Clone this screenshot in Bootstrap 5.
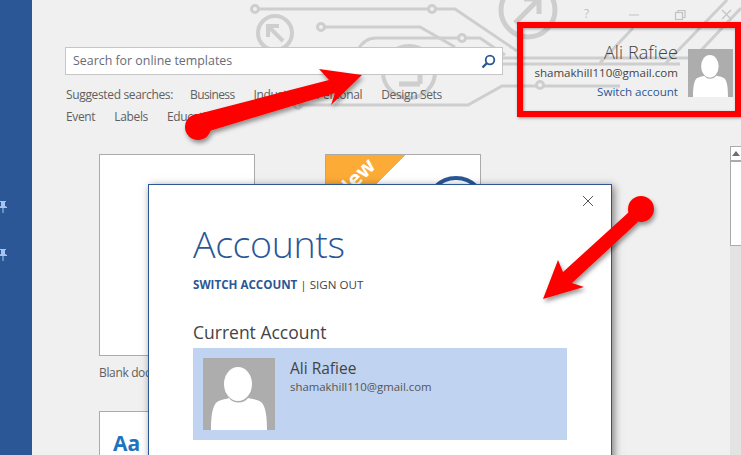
<!DOCTYPE html>
<html lang="en">
<head>
<meta charset="utf-8">
<title>Accounts</title>
<link rel="stylesheet" href="https://cdn.jsdelivr.net/npm/bootstrap@5.3.0/dist/css/bootstrap.min.css">
<style>
html,body{margin:0;width:741px;height:455px;overflow:hidden;background:#f0f0f0;font-family:"Open Sans","Noto Sans",sans-serif;color:#5f5f5f}
.shell{height:455px;position:relative;overflow:hidden}
.side{width:32px;background:#2b5797;padding-top:201px;gap:36px}
.pin{width:8px;height:12px;display:block}
.main-area{position:relative;min-width:0}
.circuit{position:absolute;left:-32px;top:0;width:741px;height:130px}
.head-row{position:relative;height:146px}
.search-col{margin-left:33px;padding-top:47px;width:438px}
.search-box{height:28px;background:#fff;border:1px solid #c6c6c6;padding:0 6px 0 7px;font-size:12.4px;color:#6a6a78}
.sugg{font-size:12px;letter-spacing:-.35px;gap:19px;line-height:22px;color:#5f5f5f;padding-left:1px}
.sugg-1{margin-top:9px}
.sugg-lead{margin-right:-2px}
.sugg-tight{letter-spacing:-.6px}
.acct{width:209px;margin-left:auto;padding-top:41px;padding-right:8px;gap:10px}
.acct-name{font-size:18px;line-height:23px;font-weight:300;color:#444;letter-spacing:.1px}
.acct-mail{font-size:11.55px;line-height:18px;color:#444}
.acct-link{font-size:11.6px;line-height:18px;color:#2b5797;margin-top:1px}
.ava-sm{width:45px;height:48px;margin-top:8px;display:block}
.gal{padding-left:67px;padding-top:8px;gap:70px}
.tile{width:156px;height:202px;background:#fff;border:1px solid #ababab;position:relative;overflow:hidden}
.tile-b{height:80px;margin-top:30px;padding:18px 13px}
.cap{font-size:12px;letter-spacing:-.35px;line-height:16px;margin-top:9px}
.aa{font-size:21px;font-weight:700;color:#1e73be;line-height:26px}
.ribbon{position:absolute;left:0;top:0;width:80px;height:80px;background:linear-gradient(135deg,#fbab36 50%,transparent 50%)}
.ribbon-t{position:absolute;left:5px;top:8px;color:#fff;font-weight:700;font-size:21px;transform:rotate(-45deg)}
.ring{position:absolute;left:99px;top:21px;width:62px;height:62px;border:4px solid #2b5797;border-radius:50%}
.scroll-wrap{position:absolute;right:0;top:146px;width:11px;height:309px;background:#e3e3e3}
.scroll-btn{height:100px;background:#fff;border:1px solid #ababab;border-right:0}
.scroll-up{height:15px;border-bottom:2px solid #ababab;padding-top:4px}
.tri{width:0;height:0;border-left:4px solid transparent;border-right:4px solid transparent;border-bottom:5px solid #6e6e6e;margin-left:1px}
.dlg{position:absolute;left:148px;top:184px;width:464px;height:290px;background:#fff;border:1px solid #2b5797;box-shadow:2px 2px 8px rgba(0,0,0,.5);padding:34px 44px 0 44px}
.dlg-x{position:absolute;right:17px;top:10px;width:12px;height:12px;display:block}
.dlg-title{font-size:37.6px;line-height:50px;font-weight:300;color:#2b5797;margin:0;letter-spacing:-.4px}
.dlg-links{font-size:11.6px;line-height:16px;margin-top:8px;color:#444}
.dlg-links b{color:#2b5797;font-weight:700}
.dlg-sec{font-size:17.5px;line-height:24px;color:#444;margin-top:27px;margin-bottom:4px}
.acc-row{background:#c0d3f0;height:92px;width:374px;padding:10px;gap:15px}
.ava-lg{width:72px;height:72px;display:block}
.acc-name{font-size:15.5px;line-height:20px;color:#444;margin-top:0}
.acc-mail{font-size:11.4px;line-height:16px;color:#555;margin-top:1px}
.ann{position:absolute;left:0;top:0;width:741px;height:455px;pointer-events:none}
.red-frame{position:absolute;left:517px;top:22px;width:224px;height:95px;border:6px solid #f00;box-shadow:1px 1px 3px rgba(0,0,0,.4),inset 1px 1px 3px rgba(0,0,0,.35)}
</style>
</head>
<body>
<svg width="0" height="0" class="d-block position-absolute">
  <defs>
    <symbol id="person" viewBox="0 0 72 72" preserveAspectRatio="none">
      <rect width="72" height="72" fill="#adadad"/>
      <ellipse cx="35" cy="26" rx="14" ry="17" fill="#fff"/>
      <path d="M8 72C8 60 9 48 14 44C19 41 24 41 26 40C30 46 41 46 45 40C49 41 54 41 58 44C63 48 64 60 64 72Z" fill="#fff"/>
    </symbol>
  </defs>
</svg>
<div class="shell d-flex">
  <aside class="side d-flex flex-column flex-shrink-0">
    <svg class="pin" viewBox="0 0 8 12"><path d="M1 0H7V1H6V5L8 6V7H4.500V12H3.500V7H0V6L2 5V1H1Z" transform="translate(-1 0)" fill="#a9c4ee"/></svg>
    <svg class="pin" viewBox="0 0 8 12"><path d="M1 0H7V1H6V5L8 6V7H4.500V12H3.500V7H0V6L2 5V1H1Z" transform="translate(-1 0)" fill="#a9c4ee"/></svg>
  </aside>
  <main class="main-area flex-grow-1">
    <svg class="circuit" viewBox="0 0 741 130" fill="none" stroke="#cecece" stroke-width="3">
      <circle cx="255" cy="9" r="3.500"/><path d="M259 9H428M436 9H455L517 51"/><circle cx="432" cy="9" r="3.500"/>
      <circle cx="321" cy="27" r="3.500"/><path d="M325 27H420L455 47"/>
      <path d="M358 50Q364 38 376 38H458M466 38H480L505 55"/><circle cx="462" cy="38" r="3.500"/>
      <path d="M503 58H690M503 64H680M633 28L600 63M727 0L665 64M741 8L690 62"/>
      <path d="M298 105H468L502 86H536M544 86H620"/><circle cx="540" cy="85" r="3.500"/><circle cx="298" cy="105" r="3.500"/>
      <circle cx="275" cy="33" r="17" stroke-width="4"/><path d="M270 28L283 41M268 37V26H279" stroke-width="4"/>
      <circle cx="528" cy="10" r="27" stroke-width="5"/><path d="M515 23L537 1M524 -1H539V14" stroke-width="5"/>
      <circle cx="409" cy="72" r="26" stroke-width="4"/><path d="M399 84H420M420 74V84" stroke-width="5"/>
      <g stroke="#c2c2c2" stroke-width="1.200"><rect x="675.500" y="12.500" width="7" height="7"/><path d="M678 12.500V10.500H685V17.500H682.500M629 15H639M722 10L731 19M731 10L722 19"/></g>
      <text x="584" y="18" fill="#c2c2c2" stroke="none" font-size="12">?</text>
    </svg>
    <div class="head-row d-flex">
      <div class="search-col flex-shrink-0 position-relative">
        <div class="search-box d-flex align-items-center justify-content-between">
          <span>Search for online templates</span>
          <svg width="15" height="15" viewBox="0 0 15 15" fill="none" stroke="#2b5797"><circle cx="9" cy="6" r="4.300" stroke-width="1.800"/><path d="M6 9L1.500 13.500" stroke-width="2.400"/></svg>
        </div>
        <div class="sugg sugg-1 d-flex"><span class="sugg-lead">Suggested searches:</span><span class="sugg-tight">Business</span><span>Industry</span><span>Personal</span><span>Design Sets</span></div>
        <div class="sugg d-flex"><span>Event</span><span>Labels</span><span>Education</span></div>
      </div>
      <div class="acct d-flex justify-content-end position-relative">
        <div class="text-end">
          <div class="acct-name">Ali Rafiee</div>
          <div class="acct-mail">shamakhill110@gmail.com</div>
          <div class="acct-link">Switch account</div>
        </div>
        <svg class="ava-sm flex-shrink-0"><use href="#person"/></svg>
      </div>
    </div>
    <div class="gal d-flex">
      <div>
        <div class="tile"></div>
        <div class="cap">Blank document</div>
        <div class="tile tile-b"><div class="aa">Aa</div></div>
      </div>
      <div>
        <div class="tile"><div class="ribbon"></div><div class="ribbon-t">New</div><div class="ring"></div></div>
      </div>
    </div>
    <div class="scroll-wrap"><div class="scroll-btn"><div class="scroll-up"><div class="tri"></div></div></div></div>
  </main>
  <section class="dlg">
    <svg class="dlg-x" viewBox="0 0 12 12" stroke="#555" stroke-width="1"><path d="M1 1L11 11M11 1L1 11"/></svg>
    <h1 class="dlg-title">Accounts</h1>
    <div class="dlg-links"><b>SWITCH ACCOUNT</b> | SIGN OUT</div>
    <div class="dlg-sec">Current Account</div>
    <div class="acc-row d-flex">
      <svg class="ava-lg flex-shrink-0"><use href="#person"/></svg>
      <div>
        <div class="acc-name">Ali Rafiee</div>
        <div class="acc-mail">shamakhill110@gmail.com</div>
      </div>
    </div>
  </section>
  <div class="red-frame"></div>
  <svg class="ann" viewBox="0 0 741 455">
    <defs><filter id="sh" x="-10%" y="-10%" width="120%" height="130%"><feDropShadow dx="1.500" dy="3" stdDeviation="2" flood-color="#000" flood-opacity=".4"/></filter></defs>
    <g fill="#f00" filter="url(#sh)">
      <circle cx="198" cy="127" r="13"/>
      <path d="M198 114L329 80L319 69L362 75L331 105L335 93L203 133Z"/>
      <circle cx="641" cy="209" r="13"/>
      <path d="M629 212L563 272L558 260L543 299L584 287L572 283L638 222Z"/>
    </g>
  </svg>
</div>
<script src="https://cdn.jsdelivr.net/npm/bootstrap@5.3.0/dist/js/bootstrap.bundle.min.js"></script>
</body>
</html>
